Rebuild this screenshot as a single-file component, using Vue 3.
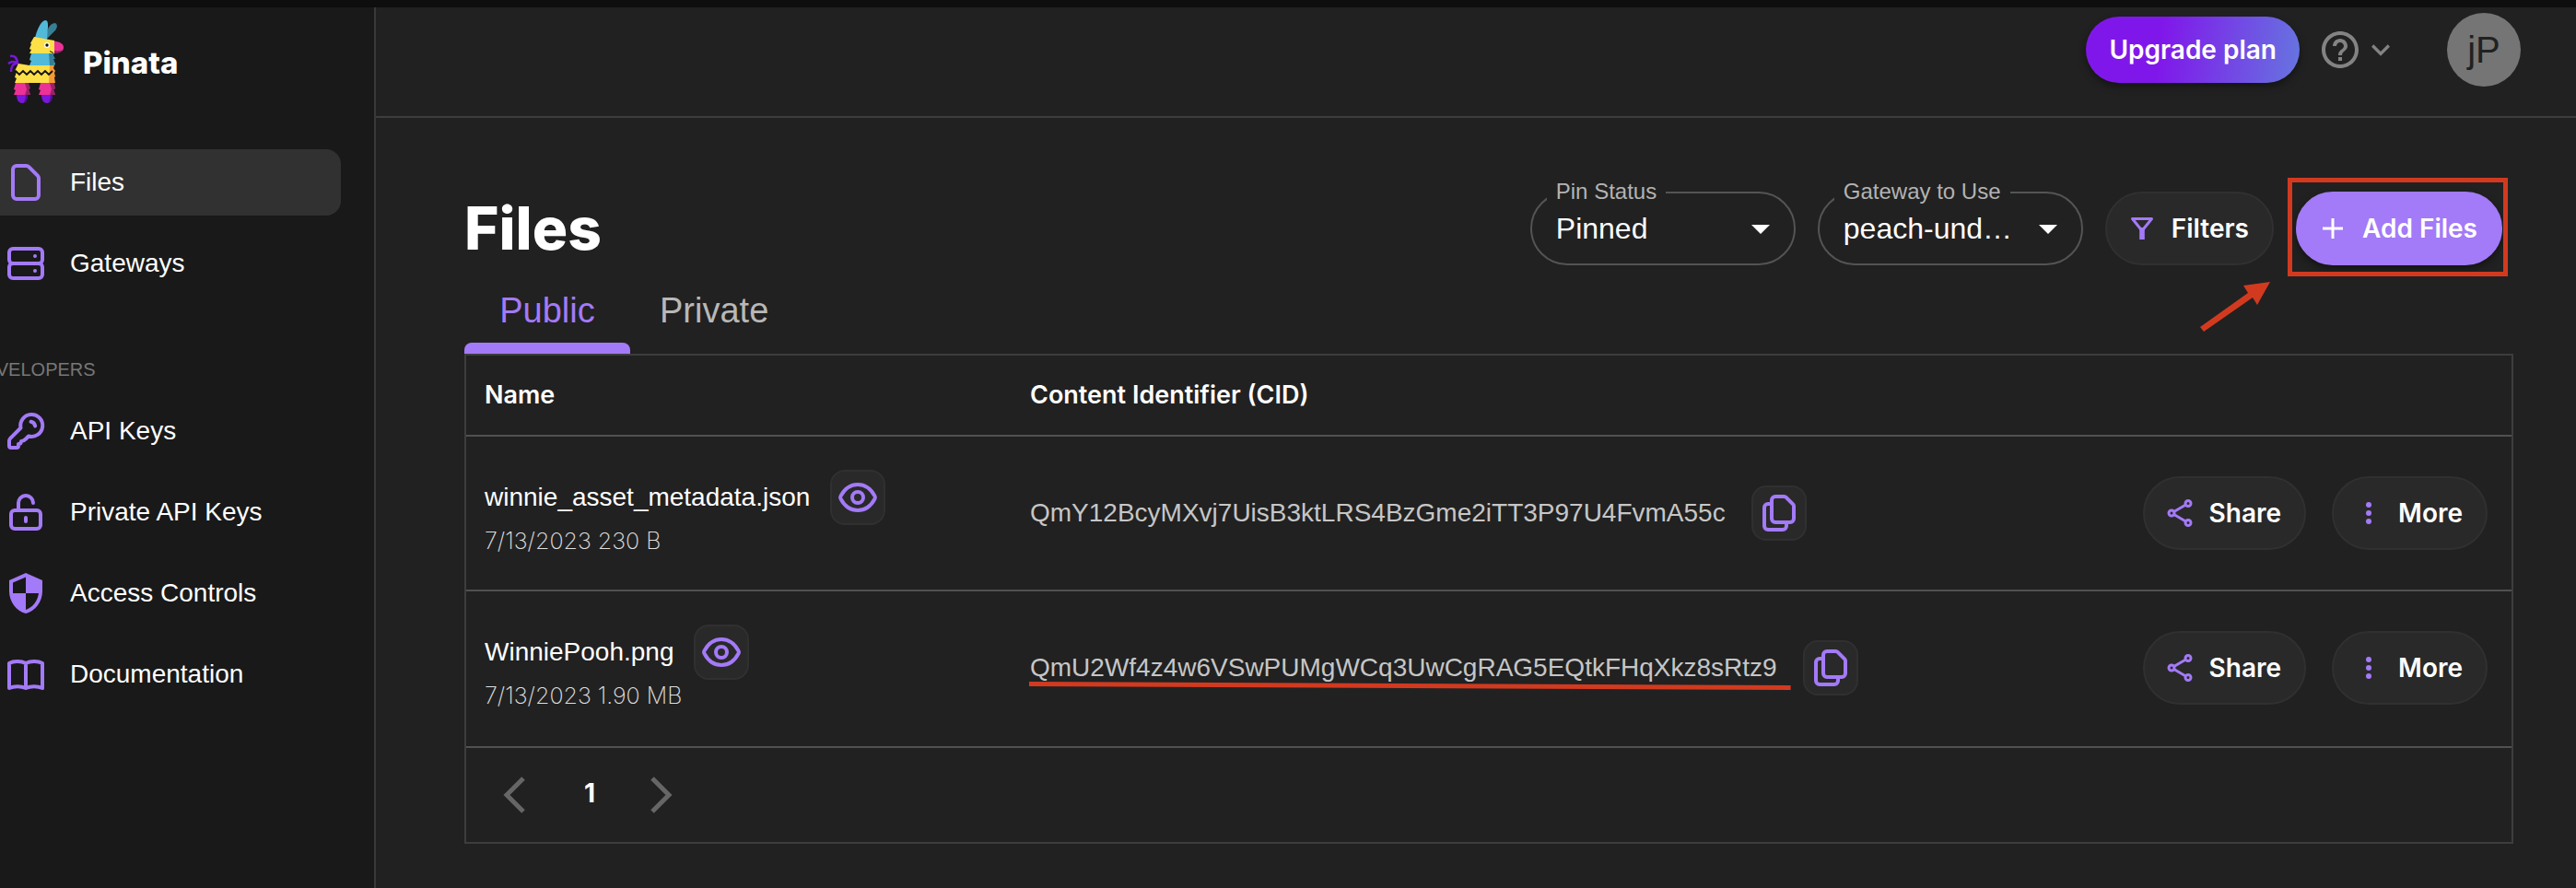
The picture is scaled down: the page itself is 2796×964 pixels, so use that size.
<script setup>
import { ref } from 'vue'

const mainNav = [
  { label: 'Files', icon: 'file', active: true },
  { label: 'Gateways', icon: 'server' },
]
const devNav = [
  { label: 'API Keys', icon: 'key' },
  { label: 'Private API Keys', icon: 'lock' },
  { label: 'Access Controls', icon: 'shield' },
  { label: 'Documentation', icon: 'book' },
]
const groups = [
  { title: '', items: mainNav },
  { title: 'DEVELOPERS', items: devNav },
]
const files = [
  {
    name: 'winnie_asset_metadata.json',
    date: '7/13/2023',
    size: '230 B',
    cid: 'QmY12BcyMXvj7UisB3ktLRS4BzGme2iTT3P97U4FvmA55c',
  },
  {
    name: 'WinniePooh.png',
    date: '7/13/2023',
    size: '1.90 MB',
    cid: 'QmU2Wf4z4w6VSwPUMgWCq3UwCgRAG5EQtkFHqXkz8sRtz9',
    marked: true,
  },
]
const tab = ref('Public')
const status = ref('Pinned')
const gateway = ref('peach-und…')
</script>

<template>
  <div class="page">
    <aside class="sidebar">
      <a class="brand" href="#">
        <svg class="logo" viewBox="8 10 64 96" aria-hidden="true">
          <path d="M51 25c1-6 5-10 9-10 3 2 2 5 0 8l-9 9z" fill="#367f96" />
          <path d="M38 31c2-8 6-18 11-19 3 0 3 3 3 7l-1 14z" fill="#52b9d9" />
          <path d="M37 30l22 4v14H32l2-4-2-1 2-5-1-1z" fill="#fde047" />
          <path d="M59 34.500c6 1 10 3 10 7s-4 6-10 6z" fill="#ec3297" />
          <path d="M59 45c4 1 7 0 9-1-2 3-5 4-9 3.500z" fill="#8f1f62" />
          <circle cx="51" cy="39" r="3" fill="#fff" />
          <circle cx="51" cy="39" r="1.700" fill="#111" />
          <path d="M54 45.500l4 2" stroke="#111" fill="none" />
          <path d="M34 48h22l3 5-2 1 3 6-2 1H32l2-5-2-1z" fill="#52b9d9" />
          <path d="M53 48h6l-1 2 2 4h-2l2 5h-2l1 2h-5z" fill="#367f96" />
          <path d="M11 51c5-1 8 2 8 9M9 59c3-2 7-3 10 0M12 68c0-5 2-9 6-9" stroke="#7a17da" stroke-width="2.600" fill="none" />
          <path d="M20 59l12 2h26v19H16l2-5-2-1 2-6-2-1z" fill="#fde047" />
          <path d="M54 61h5l-1 3 2 3-1 2 1 4-1 1 1 6h-7z" fill="#f59a35" />
          <path d="M16 68l1-1 4 4 4-4 4 4 4-4 4 4 4-4 4 4 4-4 4 4 4-4" stroke="#111" stroke-width="1.800" fill="none" />
          <path d="M17 80h13l2 6-1 1 2 6H15l2-5-2-1zM44 80h13l3 6-2 1 2 6H42l2-5-2-1z" fill="#ec3297" />
          <path d="M27 80h4l2 6-2 1 2 6h-6l2-6zM54 80h5l1 6-2 1 2 6h-6l2-6z" fill="#9b2168" />
          <path d="M18 93h12c0 5-2 9-6 9s-6-4-6-9zM45 93h12c0 5-2 9-6 9s-6-4-6-9z" fill="#7a17da" />
          <path d="M28 93h2c0 5-2 8-4 8 1-2 2-5 2-8zM55 93h2c0 5-2 8-4 8 1-2 2-5 2-8z" fill="#4b1093" />
        </svg>
        <span>Pinata</span>
      </a>

      <nav v-for="g in groups" :key="g.title" class="nav">
        <h2 v-if="g.title" class="nav-title">{{ g.title }}</h2>
        <a v-for="item in g.items" :key="item.label" href="#" class="nav-item" :class="{ active: item.active }">
          <svg class="icon48" viewBox="0 0 48 48" aria-hidden="true">
            <path v-if="item.icon === 'file'" d="M14 6h10.500a4 4 0 0 1 2.800 1.200l9.500 9.500a4 4 0 0 1 1.200 2.800V38a4 4 0 0 1-4 4H14a4 4 0 0 1-4-4V10a4 4 0 0 1 4-4z" />
            <g v-else-if="item.icon === 'server'">
              <rect x="6" y="8" width="36" height="16" rx="4" />
              <rect x="6" y="24" width="36" height="16" rx="4" />
              <circle class="solid" cx="34" cy="16" r="2" />
              <circle class="solid" cx="34" cy="32" r="2" />
            </g>
            <g v-else-if="item.icon === 'key'">
              <path d="M18.500 20.500 7.200 31.800A4 4 0 0 0 6 34.600V40a2 2 0 0 0 2 2h6a2 2 0 0 0 2-2v-2c2 0 3-1 3-3 2.500 0 3.500-1 5-2.500l3-3A12 12 0 1 0 18.500 20.500z" />
              <path d="M29.500 13.800a6 6 0 0 1 4.700 4.700" />
            </g>
            <g v-else-if="item.icon === 'lock'">
              <rect x="8" y="22" width="32" height="20" rx="4" />
              <path d="M16 22v-8a8 8 0 0 1 16 0M24 30v4" />
            </g>
            <path v-else-if="item.icon === 'shield'" class="solid" d="M24 2 6 10v12c0 11.100 7.700 21.500 18 24 10.300-2.500 18-12.900 18-24V10L24 2zm0 22h14c-1.100 8.200-6.600 15.600-14 17.900V24H10V12.600l14-6.200V24z" />
            <path v-else d="M24 12c-5-2.600-13-3-18 0v27c5-2.500 13-2.500 18 0 5-2.500 13-2.500 18 0V12c-5-3-13-2.600-18 0zv26" />
          </svg>
          <span>{{ item.label }}</span>
        </a>
      </nav>
    </aside>

    <div class="main">
      <header class="topbar">
        <button class="upgrade" type="button">Upgrade plan</button>
        <button class="help" type="button" aria-label="Help">
          <svg class="help-icon" viewBox="0 0 24 24" aria-hidden="true">
            <path d="M11 18h2v-2h-2v2zm1-16C6.480 2 2 6.480 2 12s4.480 10 10 10 10-4.480 10-10S17.520 2 12 2zm0 18c-4.410 0-8-3.590-8-8s3.590-8 8-8 8 3.590 8 8-3.590 8-8 8zm0-14c-2.210 0-4 1.790-4 4h2c0-1.100.9-2 2-2s2 .9 2 2c0 2-3 1.750-3 5h2c0-2.250 3-2.500 3-5 0-2.210-1.790-4-4-4z" />
          </svg>
          <svg class="help-caret" viewBox="0 0 24 24" aria-hidden="true">
            <path d="M16.590 8.590 12 13.170 7.410 8.590 6 10l6 6 6-6z" />
          </svg>
        </button>
        <button class="avatar" type="button">jP</button>
      </header>

      <main class="content">
        <div class="head">
          <h1>Files</h1>
          <div class="toolbar">
            <div class="field">
              <label for="pin-status">Pin Status</label>
              <select id="pin-status" v-model="status"><option>Pinned</option></select>
              <svg class="caret" viewBox="0 0 20 10" aria-hidden="true"><path d="M0 0h20L10 10z" /></svg>
            </div>
            <div class="field">
              <label for="gateway">Gateway to Use</label>
              <select id="gateway" v-model="gateway"><option>peach-und…</option></select>
              <svg class="caret" viewBox="0 0 20 10" aria-hidden="true"><path d="M0 0h20L10 10z" /></svg>
            </div>
            <button class="pill" type="button">
              <svg class="icon32" viewBox="0 0 32 32" aria-hidden="true">
                <path class="line" d="M5.500 5.500h21L16 18.500z" stroke-linejoin="round" />
                <path d="M13.200 15h5.600v13h-5.600z" />
              </svg>
              Filters
            </button>
            <div class="callout">
              <button class="pill primary" type="button">
                <svg class="icon32" viewBox="0 0 32 32" aria-hidden="true">
                  <path d="M14.500 5h3v9.500H27v3h-9.500V27h-3v-9.500H5v-3h9.500z" />
                </svg>
                Add Files
              </button>
              <svg class="arrow" viewBox="0 0 80 56" aria-hidden="true">
                <path d="M78 2 64 27l-5-8L6 56l-4-5 52-37-5-8z" />
              </svg>
            </div>
          </div>
        </div>

        <div class="tabs" role="tablist">
          <button v-for="t in ['Public', 'Private']" :key="t" type="button" role="tab" class="tab"
            :class="{ selected: tab === t }" :aria-selected="tab === t" @click="tab = t">{{ t }}</button>
        </div>

        <section class="panel">
          <table>
            <thead>
              <tr>
                <th class="col-name" scope="col">Name</th>
                <th scope="col">Content Identifier (CID)</th>
                <td></td>
              </tr>
            </thead>
            <tbody>
              <tr v-for="f in files" :key="f.cid">
                <td>
                  <div class="with-action">
                    <span class="name">{{ f.name }}</span>
                    <button class="square" type="button" aria-label="View file">
                      <svg class="icon48" viewBox="0 0 48 48" aria-hidden="true">
                        <path d="M5.500 22.500C9.500 15 16 10 24 10s14.500 5 18.500 12.500a3 3 0 0 1 0 3C38.500 33 32 38 24 38S9.500 33 5.500 25.500a3 3 0 0 1 0-3z" />
                        <circle cx="24" cy="24" r="6" />
                      </svg>
                    </button>
                  </div>
                  <div class="meta">{{ f.date }} {{ f.size }}</div>
                </td>
                <td>
                  <div class="with-action wide">
                    <span class="cid">{{ f.cid }}
                      <svg v-if="f.marked" class="mark" viewBox="0 0 828 10" preserveAspectRatio="none" aria-hidden="true">
                        <path d="M0 0 828 4v5L0 5z" />
                      </svg>
                    </span>
                    <button class="square" type="button" aria-label="Copy CID">
                      <svg class="icon48" viewBox="0 0 48 48" aria-hidden="true">
                        <path d="M20 6h9.500a3 3 0 0 1 2.100.9l7.500 7.500a3 3 0 0 1 .9 2.100V30a4 4 0 0 1-4 4H20a4 4 0 0 1-4-4V10a4 4 0 0 1 4-4z" />
                        <path d="M16 14h-4a4 4 0 0 0-4 4v20a4 4 0 0 0 4 4h16a4 4 0 0 0 4-4v-4" />
                      </svg>
                    </button>
                  </div>
                </td>
                <td>
                  <div class="actions">
                    <button class="pill" type="button">
                      <svg class="icon32" viewBox="0 0 32 32" aria-hidden="true">
                        <g class="line">
                          <circle cx="7" cy="16" r="3" />
                          <circle cx="25" cy="5.500" r="3" />
                          <circle cx="25" cy="26.500" r="3" />
                          <path d="M9.600 14.500 22.400 7M9.600 17.500 22.400 25" />
                        </g>
                      </svg>
                      Share
                    </button>
                    <button class="pill" type="button">
                      <svg class="icon32" viewBox="0 0 32 32" aria-hidden="true">
                        <circle cx="16" cy="7" r="3" />
                        <circle cx="16" cy="16" r="3" />
                        <circle cx="16" cy="25" r="3" />
                      </svg>
                      More
                    </button>
                  </div>
                </td>
              </tr>
            </tbody>
          </table>
          <nav class="pager" aria-label="Pages">
            <button type="button" aria-label="Previous page">
              <svg viewBox="0 0 24 40" aria-hidden="true"><path d="M22 2 4 20l18 18" /></svg>
            </button>
            <span class="page-no">1</span>
            <button type="button" aria-label="Next page">
              <svg viewBox="0 0 24 40" aria-hidden="true"><path d="m2 2 18 18L2 38" /></svg>
            </button>
          </nav>
        </section>
      </main>
    </div>
  </div>
</template>

<style>
body {
  margin: 0;
  background: #212121;
}
</style>

<style scoped>
* {
  box-sizing: border-box;
}
.page {
  display: flex;
  min-height: 100vh;
  overflow-x: hidden;
  border-top: 8px solid #0e0e0e;
  background: #212121;
  color: #fff;
  font-family: "Liberation Sans", Arial, sans-serif;
  font-size: 28px;
  line-height: 36px;
}
button {
  margin: 0;
  padding: 0;
  border: 0;
  background: none;
  color: inherit;
  font: inherit;
  cursor: pointer;
}
a {
  color: inherit;
  text-decoration: none;
}
svg {
  display: block;
  flex: none;
}

.sidebar {
  flex: none;
  width: 408px;
  border-right: 2px solid #393939;
  background: #191919;
  overflow: hidden;
}
.brand {
  display: flex;
  align-items: center;
  gap: 18px;
  margin-bottom: 46px;
  padding: 12px 0 0 8px;
  font-family: Inter, sans-serif;
  font-size: 33px;
  font-weight: 800;
}
.logo {
  width: 64px;
  height: 96px;
}
.nav {
  display: flex;
  flex-direction: column;
  gap: 16px;
}
.nav-title {
  margin: 67px 0 3px;
  text-indent: -32px;
  color: #777;
  font-size: 20px;
  font-weight: 400;
  line-height: 24px;
}
.nav-item {
  display: flex;
  align-items: center;
  gap: 24px;
  height: 72px;
  margin-right: 36px;
  padding-left: 4px;
  border-radius: 0 16px 16px 0;
}
.nav-item.active {
  background: #313131;
}
.icon48 {
  width: 48px;
  height: 48px;
  fill: none;
  stroke: #a37af7;
  stroke-width: 4;
  stroke-linecap: round;
  stroke-linejoin: round;
}
.icon48 .solid {
  fill: #a37af7;
  stroke: none;
}

.main {
  flex: 1;
  min-width: 0;
}
.topbar {
  display: flex;
  align-items: center;
  justify-content: flex-end;
  padding: 6px 60px 32px;
  border-bottom: 2px solid #3d3d3d;
}
.upgrade {
  height: 72px;
  padding: 0 25px;
  border-radius: 36px;
  background: linear-gradient(97deg, #8017ea 35%, #6675e0);
  box-shadow: 0 4px 8px rgb(0 0 0 / 40%);
  font-family: Inter, sans-serif;
  font-weight: 600;
}
.help {
  display: flex;
  align-items: center;
  margin-left: 20px;
  fill: #838383;
}
.help-icon {
  width: 48px;
  height: 48px;
}
.help-caret {
  width: 40px;
  height: 40px;
}
.avatar {
  width: 80px;
  height: 80px;
  margin-left: 52px;
  border-radius: 50%;
  background: #757575;
  color: #212121;
  font-size: 40px;
}

.content {
  padding: 80px 68px 48px 96px;
}
.head {
  display: flex;
  align-items: center;
  justify-content: space-between;
  height: 80px;
  padding-right: 12px;
}
h1 {
  margin: 0;
  font-family: Inter, sans-serif;
  font-size: 64px;
  font-weight: 800;
  line-height: 80px;
}
.toolbar {
  display: flex;
  gap: 24px;
}
.field {
  position: relative;
  width: 288px;
  height: 80px;
  border: 2px solid #545454;
  border-radius: 40px;
}
.field label {
  position: absolute;
  top: -14px;
  left: 16px;
  padding: 0 10px;
  background: #212121;
  color: #b3b3b3;
  font-size: 24px;
  line-height: 24px;
}
.field select {
  width: 100%;
  height: 100%;
  padding: 0 64px 0 26px;
  border: 0;
  background: none;
  color: #fff;
  font: inherit;
  font-size: 32px;
  appearance: none;
}
.caret {
  position: absolute;
  top: 34px;
  right: 26px;
  width: 20px;
  height: 10px;
  fill: #fff;
  pointer-events: none;
}
.pill {
  display: flex;
  align-items: center;
  gap: 16px;
  height: 80px;
  padding: 0 25px 0 22px;
  border: 2px solid #303030;
  border-radius: 40px;
  background: #292929;
  font-family: Inter, sans-serif;
  font-weight: 600;
}
.icon32 {
  width: 32px;
  height: 32px;
  fill: #a37af7;
}
.icon32 .line {
  fill: none;
  stroke: #a37af7;
  stroke-width: 3;
}
.pill.primary {
  border-color: #a37af7;
  background: #a37af7;
  box-shadow: 0 4px 8px rgb(0 0 0 / 40%);
}
.primary .icon32 {
  fill: #fff;
}
.callout {
  position: relative;
}
.callout::after {
  content: "";
  position: absolute;
  inset: -15px -6px -12px -9px;
  border: 5px solid #d23a20;
  pointer-events: none;
}
.arrow {
  position: absolute;
  top: 96px;
  right: 250px;
  width: 80px;
  height: 56px;
  fill: #d23a20;
}

.tabs {
  display: flex;
  height: 96px;
}
.tab {
  min-width: 180px;
  padding: 2px 32px 0;
  border-top: 12px solid transparent;
  border-bottom: 12px solid transparent;
  color: #b8b8b8;
  font-size: 38px;
}
.tab.selected {
  position: relative;
  color: #a37af7;
}
.tab.selected::after {
  content: "";
  position: absolute;
  right: 0;
  bottom: -12px;
  left: 0;
  height: 12px;
  border-radius: 8px 8px 0 0;
  background: #a37af7;
}

.panel {
  border: 2px solid #3d3d3d;
}
table {
  width: 100%;
  border-collapse: separate;
  border-spacing: 0;
}
th,
td {
  padding: 0 20px;
  border-bottom: 2px solid #515151;
  text-align: left;
}
th {
  height: 88px;
  font-family: Inter, sans-serif;
  font-size: 27px;
  font-weight: 600;
}
.col-name {
  width: 592px;
}
tbody td {
  height: 168px;
}
tbody tr:last-child td {
  border-bottom-color: transparent;
}
.with-action {
  display: flex;
  align-items: center;
  gap: 22px;
}
.with-action.wide {
  gap: 28px;
}
.square {
  display: grid;
  place-items: center;
  width: 60px;
  height: 60px;
  border: 2px solid #303030;
  border-radius: 16px;
  background: #292929;
}
.meta {
  color: #e0e0e0;
  font-family: Inter, sans-serif;
  font-size: 25px;
  font-weight: 200;
  line-height: 34px;
}
.cid {
  position: relative;
  color: #c6c6c6;
}
.mark {
  position: absolute;
  top: 33px;
  left: -1px;
  width: calc(100% + 16px);
  height: 10px;
  fill: #d23a20;
}
.actions {
  display: flex;
  justify-content: flex-end;
  gap: 28px;
  padding-right: 6px;
}
.pager {
  display: flex;
  align-items: center;
  gap: 60px;
  height: 104px;
  padding-left: 40px;
  border-top: 2px solid #515151;
}
.pager svg {
  width: 24px;
  height: 40px;
  fill: none;
  stroke: #666;
  stroke-width: 5;
}
.page-no {
  padding: 0 0 4px 4px;
  font-family: Inter, sans-serif;
  font-weight: 700;
}
</style>
